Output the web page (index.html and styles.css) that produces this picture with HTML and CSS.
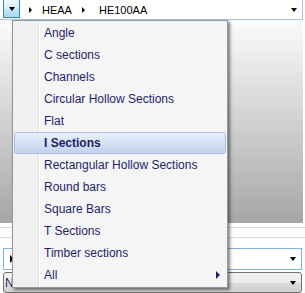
FILE: index.html
```html
<!DOCTYPE html>
<html lang="en">
<head>
    <meta charset="UTF-8">
    <title>Section picker</title>
    <link rel="stylesheet" href="styles.css">
</head>
<body>

<div class="window">

  <div class="topbar">
    <div class="drop-btn"><span class="tri-down"></span></div>
    <span class="crumb-arrow"></span>
    <span class="crumb">HEAA</span>
    <span class="crumb-arrow"></span>
    <span class="crumb">HE100AA</span>
    <span class="tri-down combo-arrow"></span>
  </div>

  <div class="panel"></div>

  <div class="rule first"></div>
  <div class="rule"></div>

  <div class="combo combo-edit">
    <span class="crumb-arrow big"></span>
    <span class="tri-down combo-arrow"></span>
  </div>
  <div class="combo combo-btn">
    <span class="combo-text">N</span>
    <span class="tri-down combo-arrow"></span>
  </div>

  <ul class="menu">
    <li>Angle</li>
    <li>C sections</li>
    <li>Channels</li>
    <li>Circular Hollow Sections</li>
    <li>Flat</li>
    <li class="active">I Sections</li>
    <li>Rectangular Hollow Sections</li>
    <li>Round bars</li>
    <li>Square Bars</li>
    <li>T Sections</li>
    <li>Timber sections</li>
    <li class="sub">All<span class="sub-arrow"></span></li>
  </ul>

</div>

</body>
</html>
```

FILE: styles.css
```css
body {margin: 0;
      font-family: "Liberation Sans", Arial, sans-serif;
      font-size: 12px;
      background: #fff;}

.window {position: relative;
         width: 305px;
         height: 293px;
         overflow: hidden;}

/* top breadcrumb bar */
.topbar {display: flex;
         align-items: center;
         width: 303px;
         height: 20px;
         box-sizing: border-box;
         border-right: 1px solid #a9c4e2;
         border-bottom: 1px solid #a9c4e2;}

.drop-btn {display: flex;
           align-items: center;
           justify-content: center;
           align-self: flex-start;
           width: 17px;
           height: 18px;
           margin-left: 3px;
           box-sizing: border-box;
           border: 1px solid #3c7fb1;
           border-top: none;
           background: linear-gradient(#eaf6fd, #d9f0fc 50%, #bee6fd 51%, #a7d9f5);}

.tri-down {width: 0;
           height: 0;
           border-left: 3.5px solid transparent;
           border-right: 3.5px solid transparent;
           border-top: 4px solid #000;}

.crumb-arrow {width: 0;
              height: 0;
              margin-left: 9px;
              border-top: 3px solid transparent;
              border-bottom: 3px solid transparent;
              border-left: 3px solid #000;}

.crumb {margin-left: 10px;
        font-size: 11px;
        color: #000;}

.crumb + .crumb-arrow {margin-left: 10px;}
.crumb-arrow + .crumb {margin-left: 14px;}
.drop-btn + .crumb-arrow + .crumb {margin-left: 10px;}

.combo-arrow {margin-left: auto;
              margin-right: 5px;}

/* gray area behind the menu */
.panel {width: 303px;
        height: 203px;
        background: linear-gradient(#fbfbfb, #cdcdcd 55%, #a6a6a6);}

.rule {height: 1px;
       margin-top: 9px;
       background: #d5dde6;}
.rule.first {margin-top: 4px;}

.combo {display: flex;
        align-items: center;
        width: 299px;
        margin-left: 3px;
        box-sizing: border-box;}

.combo-edit {height: 22px;
             margin-top: 10px;
             border: 1px solid #7eb4ea;
             background: #fff;}

.crumb-arrow.big {margin-left: 6px;
                  border-top-width: 4px;
                  border-bottom-width: 4px;
                  border-left-width: 4px;}

.combo-btn {height: 21px;
            margin-top: 2px;
            border: 1px solid #707070;
            border-radius: 3px;
            background: linear-gradient(#f2f2f2, #ebebeb 50%, #dddddd 51%, #cfcfcf);}

.combo-text {margin-left: 1px;
             color: #1e1e6e;}

/* dropdown menu */
.menu {position: absolute;
       left: 12px;
       top: 20px;
       width: 216px;
       margin: 0;
       padding: 1px;
       list-style: none;
       box-sizing: border-box;
       border: 1px solid #979797;
       background: linear-gradient(to right, #f0f0f0 25px, #e2e3e3 25px 26px, #fff 26px 27px, #f5f5f5 27px);
       box-shadow: 2px 2px 3px rgba(0, 0, 0, 0.5);
       color: #1e1e6e;}

.menu li {display: flex;
          align-items: center;
          height: 22px;
          padding-left: 29px;
          box-sizing: border-box;
          border: 1px solid transparent;
          border-radius: 3px;}

.menu li.active {font-weight: bold;
                 border-color: #a8bfe0;
                 background: linear-gradient(#e8eff9, #d6e2f4 50%, #c3d3ed);}

.sub-arrow {width: 0;
            height: 0;
            margin-left: auto;
            margin-right: 5px;
            border-top: 4px solid transparent;
            border-bottom: 4px solid transparent;
            border-left: 4px solid #1e1e6e;}
```
